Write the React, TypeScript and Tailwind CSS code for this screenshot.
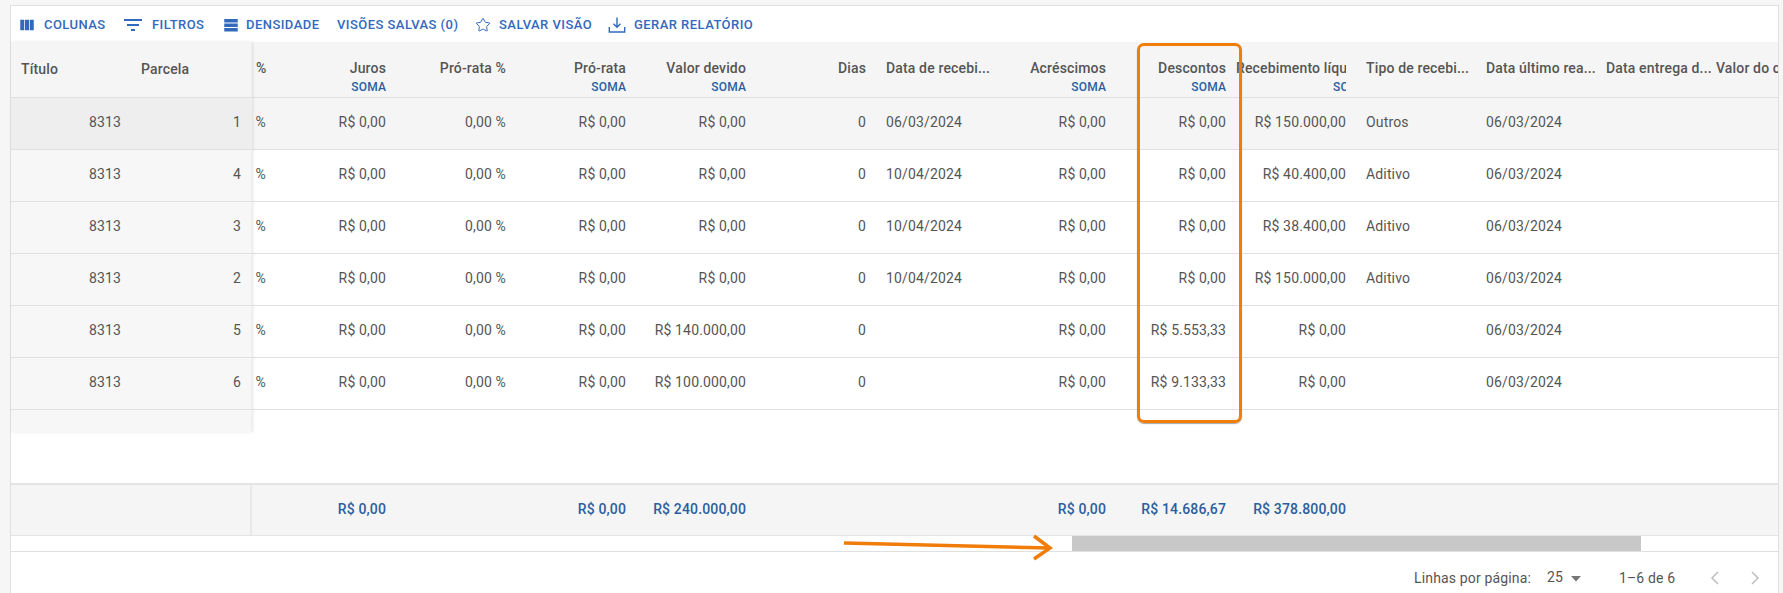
import { Star } from 'lucide-react';

type Column = {
    label: string;
    width: number;
    right?: boolean;
    soma?: boolean;
    clip?: boolean;
    values: string[];
    total?: string;
};

const zero = 'R$ 0,00';
const zeros = [zero, zero, zero, zero, zero, zero];
const today = '06/03/2024';

const columns: Column[] = [
    { label: '%', width: 24, right: true, values: ['%', '%', '%', '%', '%', '%'] },
    { label: 'Juros', width: 120, right: true, soma: true, values: zeros, total: zero },
    { label: 'Pró-rata %', width: 120, right: true, values: ['0,00 %', '0,00 %', '0,00 %', '0,00 %', '0,00 %', '0,00 %'] },
    { label: 'Pró-rata', width: 120, right: true, soma: true, values: zeros, total: zero },
    {
        label: 'Valor devido',
        width: 120,
        right: true,
        soma: true,
        values: [zero, zero, zero, zero, 'R$ 140.000,00', 'R$ 100.000,00'],
        total: 'R$ 240.000,00',
    },
    { label: 'Dias', width: 120, right: true, values: ['0', '0', '0', '0', '0', '0'] },
    { label: 'Data de recebi...', width: 120, values: [today, '10/04/2024', '10/04/2024', '10/04/2024', '', ''] },
    { label: 'Acréscimos', width: 120, right: true, soma: true, values: zeros, total: zero },
    {
        label: 'Descontos',
        width: 120,
        right: true,
        soma: true,
        values: [zero, zero, zero, zero, 'R$ 5.553,33', 'R$ 9.133,33'],
        total: 'R$ 14.686,67',
    },
    {
        label: 'Recebimento líquido',
        width: 120,
        right: true,
        soma: true,
        clip: true,
        values: ['R$ 150.000,00', 'R$ 40.400,00', 'R$ 38.400,00', 'R$ 150.000,00', zero, zero],
        total: 'R$ 378.800,00',
    },
    { label: 'Tipo de recebi...', width: 120, values: ['Outros', 'Aditivo', 'Aditivo', 'Aditivo', '', ''] },
    { label: 'Data último rea...', width: 120, values: [today, today, today, today, today, today] },
    { label: 'Data entrega d...', width: 120, values: ['', '', '', '', '', ''] },
    { label: 'Valor do custo', width: 120, clip: true, values: ['', '', '', '', '', ''] },
];

const frozenRows = [
    ['8313', '1'],
    ['8313', '4'],
    ['8313', '3'],
    ['8313', '2'],
    ['8313', '5'],
    ['8313', '6'],
];

function ColumnsIcon() {
    return (
        <svg width="18" height="18" viewBox="0 0 24 24" fill="#3269bd">
            <path d="M14.67 5v14H9.33V5h5.34zm1 14H21V5h-5.33v14zm-7.34 0V5H3v14h5.33z" />
        </svg>
    );
}

function FilterIcon() {
    return (
        <svg width="24" height="24" viewBox="0 0 24 24" fill="#3269bd">
            <path d="M10 18h4v-2h-4v2zM3 6v2h18V6H3zm3 7h12v-2H6v2z" />
        </svg>
    );
}

function DensityIcon() {
    return (
        <svg width="18" height="18" viewBox="0 0 24 24" fill="#3269bd">
            <path d="M3 4h18v4.5H3zM3 10h18v4.5H3zM3 16h18v4.5H3z" />
        </svg>
    );
}

function DownloadIcon() {
    return (
        <svg width="18" height="18" viewBox="0 0 18 18" fill="none" stroke="#3269bd" strokeWidth="1.4">
            <path d="M9 1.5v9.5M5.5 7.8 9 11.2l3.5-3.4M1.3 11v5h15.4v-5" />
        </svg>
    );
}

function HeaderCell({ col }: { col: Column }) {
    const padding = col.clip ? 'pl-0 pr-[10px]' : col.width < 100 ? 'pl-[4px] pr-[10px]' : 'px-[10px]';
    return (
        <div
            className={`shrink-0 h-full flex flex-col justify-start pt-[17px] overflow-hidden ${padding} ${
                col.right ? 'items-end' : 'items-start'
            }`}
            style={{ width: col.width }}
        >
            <div
                className={`w-full whitespace-nowrap font-medium text-[14px] leading-[19px] text-[#555] ${
                    col.clip ? 'overflow-hidden' : col.right ? 'text-right' : 'text-left'
                }`}
            >
                {col.label}
            </div>
            {col.soma &&
                (col.clip ? (
                    <div className="w-full overflow-hidden text-right h-[18px]">
                        <span className="inline-block w-[13px] overflow-hidden align-top text-[12px] leading-[18px] font-medium text-[#2c5e9e]">
                            SOMA
                        </span>
                    </div>
                ) : (
                    <div className="text-[12px] leading-[18px] font-medium text-[#2c5e9e]">SOMA</div>
                ))}
        </div>
    );
}

export default function App() {
    return (
        <div
            className="relative h-[593px] overflow-hidden bg-[#f6f6f6] pt-[5px] pl-[10px] pr-[4px] tracking-[0.15px]"
            style={{ fontFamily: 'Roboto, sans-serif' }}
        >
            <div className="h-[600px] border border-[#e0e0e0] bg-white flex flex-col">
                <div className="h-[36px] shrink-0 flex items-center pl-[7px] pt-[2px] text-[13px] font-medium tracking-[0.45px] text-[#3269bd] whitespace-nowrap">
                    <span className="w-[26px] flex"><ColumnsIcon /></span>
                    <span className="w-[78px]">COLUNAS</span>
                    <span className="w-[31px] flex ml-[-1px]"><FilterIcon /></span>
                    <span className="w-[70px]">FILTROS</span>
                    <span className="w-[24px] flex"><DensityIcon /></span>
                    <span className="w-[91px]">DENSIDADE</span>
                    <span className="w-[138px]">VISÕES SALVAS (0)</span>
                    <span className="w-[24px] flex"><Star size={16} strokeWidth={1.5} /></span>
                    <span className="w-[109px]">SALVAR VISÃO</span>
                    <span className="w-[26px] flex"><DownloadIcon /></span>
                    <span>GERAR RELATÓRIO</span>
                </div>

                <div className="h-[441px] shrink-0 flex">
                    <div className="w-[241px] shrink-0 h-[390px] bg-[#f7f7f7] border-r border-[#eeeeee] shadow-[1px_0_3px_rgba(0,0,0,0.1)] z-10 text-[14px] text-[#555]">
                        <div className="h-[56px] bg-[#f5f5f5] border-b border-[#e0e0e0] flex items-center font-medium">
                            <span className="w-[120px] pl-[10px]">Título</span>
                            <span className="w-[120px] pl-[10px]">Parcela</span>
                        </div>
                        {frozenRows.map(([title, parcel], i) => (
                            <div
                                key={parcel}
                                className={`h-[52px] flex items-center pb-[2px] border-b border-[#e0e0e0] ${
                                    i === 0 ? 'bg-[#eeeeee]' : ''
                                }`}
                            >
                                <span className="w-[120px] pr-[10px] text-right">{title}</span>
                                <span className="w-[120px] pr-[10px] text-right">{parcel}</span>
                            </div>
                        ))}
                    </div>

                    <div className="flex-1 min-w-0 overflow-hidden">
                        <div className="h-[56px] bg-[#f5f5f5] border-b border-[#e0e0e0] flex">
                            {columns.map((col) => (
                                <HeaderCell key={col.label} col={col} />
                            ))}
                        </div>
                        {frozenRows.map((_, i) => (
                            <div
                                key={i}
                                className={`h-[52px] flex items-center pb-[2px] border-b border-[#e0e0e0] text-[14px] text-[#555] ${
                                    i === 0 ? 'bg-[#f5f5f5]' : ''
                                }`}
                            >
                                {columns.map((col) => (
                                    <div
                                        key={col.label}
                                        className={`shrink-0 whitespace-nowrap ${
                                            col.right ? 'pr-[10px] text-right' : 'pl-[10px] text-left'
                                        }`}
                                        style={{ width: col.width }}
                                    >
                                        {col.values[i]}
                                    </div>
                                ))}
                            </div>
                        ))}
                    </div>
                </div>

                <div className="h-[53px] shrink-0 flex bg-[#f5f5f5] border-t-2 border-b border-[#e4e4e4]">
                    <div className="w-[241px] shrink-0 border-r-2 border-[#e8e8e8]" />
                    <div className="flex-1 min-w-0 overflow-hidden flex items-center text-[14px] font-medium text-[#2c5e9e] pb-[2px]">
                        {columns.map((col) => (
                            <div
                                key={col.label}
                                className="shrink-0 pr-[10px] text-right whitespace-nowrap"
                                style={{ width: col.width }}
                            >
                                {col.total}
                            </div>
                        ))}
                    </div>
                </div>

                <div className="h-[16px] shrink-0 border-b border-[#e0e0e0]">
                    <div className="h-full ml-[1061px] w-[569px] bg-[#c8c8c8]" />
                </div>

                <div className="h-[42px] shrink-0 flex items-center pt-[10px] text-[14px] text-[#555] whitespace-nowrap">
                    <span className="ml-[1403px] w-[133px]">Linhas por página:</span>
                    <span className="w-[23px] mt-[-2px]">25</span>
                    <svg width="12" height="6" viewBox="0 0 12 6" fill="#757575" className="mt-[2px]">
                        <path d="M1 0h10L6 5.5z" />
                    </svg>
                    <span className="ml-[37px] w-[91px]">1–6 de 6</span>
                    <svg width="10" height="14" viewBox="0 0 10 14" fill="none" stroke="#bdbdbd" strokeWidth="1.5">
                        <path d="M8 1 2 7l6 6" />
                    </svg>
                    <svg width="10" height="14" viewBox="0 0 10 14" fill="none" stroke="#bdbdbd" strokeWidth="1.5" className="ml-[30px]">
                        <path d="m2 1 6 6-6 6" />
                    </svg>
                </div>
            </div>

            {/* orange annotations drawn over the table */}
            <div className="absolute left-[1137px] top-[43px] w-[105px] h-[380px] border-[3.5px] border-[#f07c0a] rounded-[7px] shadow-[0_1px_1px_rgba(0,0,0,0.35)]" />
            <svg className="absolute left-[840px] top-[532px]" width="216" height="30" viewBox="0 0 216 30" fill="none" stroke="#f07c0a" strokeWidth="3.5">
                <path d="M4 11 209 16" />
                <path d="M194 4 210 16 194 27" />
            </svg>
        </div>
    );
}
